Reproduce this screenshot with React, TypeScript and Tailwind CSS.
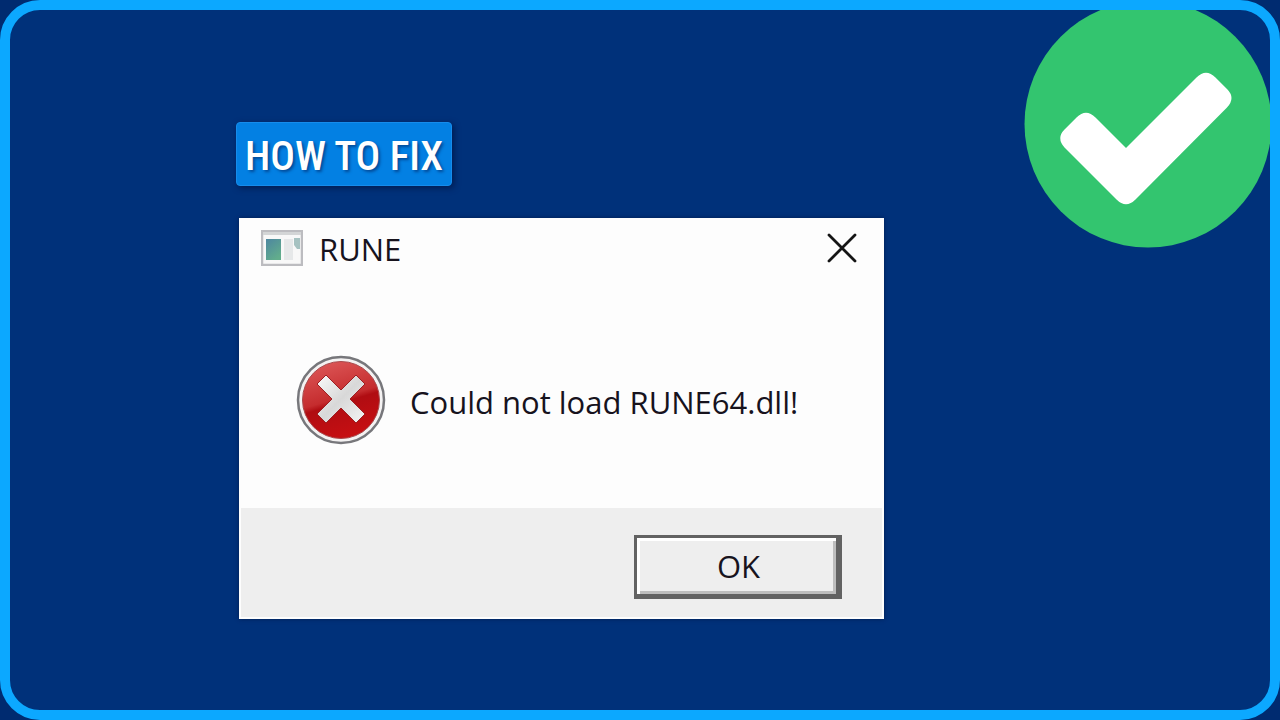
const CheckBadge = () => {
    return (
        <svg className="absolute -top-3 right-0 size-[250px]" viewBox="0 0 250 250" aria-hidden="true">
            <circle cx="128" cy="126" r="123.500" fill="#33c56f" />
            <path
                d="M56.500 119.500Q66 110 75.500 119.500L106 150L176.500 79.500Q186 70 195.500 79.500L207 91Q216 100 207 109.500L115.500 201.500Q106 211 96.500 201.500L44.500 149.500Q36 140 44.500 131.500Z"
                fill="#fff"
            />
        </svg>
    )
}

const WindowIcon = () => {
    return (
        <svg className="w-[42px] h-9" viewBox="0 0 42 36" aria-hidden="true">
            <defs>
                <linearGradient id="pane" x1="0" y1="0" x2="0.6" y2="1">
                    <stop offset="0" stopColor="#4d86a0" />
                    <stop offset="1" stopColor="#62ad8c" />
                </linearGradient>
            </defs>
            <rect x="1" y="1" width="40" height="34" fill="#f8f8f8" stroke="#bcbcc0" strokeWidth="2.500" />
            <rect x="2" y="2" width="38" height="3" fill="#d3d5d6" />
            <rect x="5" y="9" width="15" height="21" fill="url(#pane)" />
            <rect x="23" y="9" width="9" height="21" fill="#e6e8e9" />
            <path d="M33 8H39V19H36L33 15Z" fill="#a6c2c1" />
        </svg>
    )
}

const ErrorIcon = () => {
    return (
        <svg className="size-[90px] shrink-0" viewBox="0 0 90 90" aria-hidden="true">
            <defs>
                <linearGradient id="red" x1="0.3" y1="0" x2="0.6" y2="1">
                    <stop offset="0" stopColor="#dc5656" />
                    <stop offset="0.48" stopColor="#c52c2e" />
                    <stop offset="0.55" stopColor="#b00d12" />
                    <stop offset="1" stopColor="#c80f12" />
                </linearGradient>
                <linearGradient id="cross" x1="0" y1="0" x2="1" y2="1">
                    <stop offset="0" stopColor="#fafafa" />
                    <stop offset="0.5" stopColor="#d8d8d8" />
                    <stop offset="1" stopColor="#f4f4f4" />
                </linearGradient>
            </defs>
            <circle cx="45" cy="45" r="43" fill="#f4f2f2" stroke="#77777b" strokeWidth="2.500" />
            <circle cx="45" cy="45" r="38.500" fill="url(#red)" stroke="#a84a4c" strokeWidth="1" />
            <path
                d="M30 20L45 35L60 20L69 29L54 44L69 59L60 68L45 53L30 68L21 59L36 44L21 29Z"
                fill="url(#cross)"
                stroke="#9d2023"
                strokeWidth="1"
            />
        </svg>
    )
}

const Dialog = () => {
    return (
        <section
            role="dialog"
            aria-labelledby="dialog-title"
            className="w-full max-w-[645px] bg-[#fdfdfd] text-[#17131d] font-['Open_Sans','Noto_Sans',sans-serif] shadow-[0_0_4px_#001c50]"
        >
            <header className="flex items-center h-[60px] pl-[22px] pr-6">
                <WindowIcon />
                <h2 id="dialog-title" className="ml-4 mt-0.5 text-[31px] leading-10">RUNE</h2>
                <button aria-label="Close" className="ml-auto p-0.5">
                    <svg className="size-8" viewBox="0 0 32 32" aria-hidden="true">
                        <path d="M3 3L29 29M29 3L3 29" stroke="#151515" strokeWidth="2.800" strokeLinecap="round" />
                    </svg>
                </button>
            </header>
            <div className="flex items-center gap-6 h-[230px] px-[57px] pt-3.5">
                <ErrorIcon />
                <p className="pt-1 text-[31px] leading-10">Could not load RUNE64.dll!</p>
            </div>
            <footer className="flex justify-end items-center h-[111px] pr-10 pt-2 bg-[#eee] border-x-2 border-b-2 border-[#fdfdfd]">
                <button className="w-52 h-16 pl-1 border-[3px] border-r-[6px] border-b-[5px] border-[#626262] bg-[#eee] text-[31px] leading-10 shadow-[inset_3px_3px_0_#fff,inset_-3px_-3px_0_#bdbdbd]">
                    OK
                </button>
            </footer>
        </section>
    )
}

export default function App() {
    return (
        <div className="min-h-screen flex bg-[#002b70]">
            <main className="relative flex-1 overflow-hidden rounded-[40px] border-[10px] border-[#0ca8ff] bg-[#00317a] px-[229px] pt-28 pb-20">
                <CheckBadge />
                <h1 className="-ml-[3px] mb-8 flex w-[216px] h-16 items-center justify-center rounded-sm bg-[#0380e3] border border-[#168cec] pt-1 text-white text-[41px] leading-none font-medium whitespace-nowrap font-['Roboto_Condensed',sans-serif] shadow-[2px_2px_6px_#001c50] text-shadow-[2px_2px_3px_#034a98]">
                    HOW TO FIX
                </h1>
                <Dialog />
            </main>
        </div>
    )
}
